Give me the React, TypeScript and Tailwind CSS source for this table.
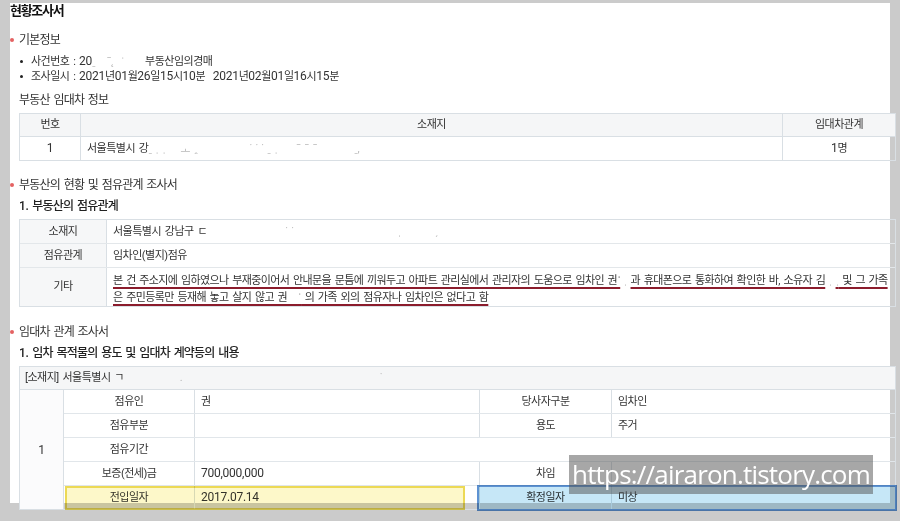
import React from "react";

const N = ({ children }: { children: React.ReactNode }) => (
  <span className="text-[12px] tracking-[-0.25px]">{children}</span>
);

const Faint = ({ w, t }: { w: string; t: string }) => (
  <span className={`inline-block overflow-hidden whitespace-pre align-top text-[#b9b9b9] ${w}`}>{t}</span>
);

const Heading = ({ children }: { children: React.ReactNode }) => (
  <div className="relative h-[16px] pl-[9px] text-[12px] leading-[16px] tracking-[-0.8px] text-[#333]">
    <span className="absolute left-0 top-[6px] h-[4px] w-[4px] rounded-full bg-[#e46262]" />
    {children}
  </div>
);

const Sub = ({ children, className = "" }: { children: React.ReactNode; className?: string }) => (
  <div className={`h-[16px] pl-[9px] text-[12px] font-medium leading-[16px] tracking-[-0.8px] text-[#222] ${className}`}>{children}</div>
);

const U = ({ children }: { children: React.ReactNode }) => (
  <span className="underline decoration-[1.5px] underline-offset-[3px] [text-decoration-color:#8b1c2c]">{children}</span>
);

export default function App() {
  return (
    <div className="relative h-[521px] w-[900px] overflow-hidden bg-[#cbcbcb] pl-[10px] pt-[10px] [font-family:Roboto,'Noto_Sans_CJK_KR',sans-serif] text-[11px] tracking-[-0.5px] [word-spacing:1.5px] text-[#333]">
      <div className="h-[500px] w-[880px] bg-white">
        {/* title */}
        <div className="-mt-[7px] h-[16px] text-[13px] font-bold leading-[16px] tracking-[-1.3px] text-[#111]">현황조사서</div>

        <div className="mt-[13px]">
          <Heading>기본정보</Heading>
        </div>
        <div className="mt-[6px] pl-[10px]">
          <div className="flex h-[15px] items-center whitespace-pre leading-[15px]">
            <span className="mr-[8px] inline-block h-[3px] w-[3px] rounded-full bg-[#222]" />
            <span>사건번호 : <N>20</N></span>
            <Faint w="w-[53px]" t="ˍ   ˉ˛  ˈ " />
            <span>부동산임의경매</span>
          </div>
          <div className="flex h-[15px] items-center whitespace-pre leading-[15px]">
            <span className="mr-[8px] inline-block h-[3px] w-[3px] rounded-full bg-[#222]" />
            <span>
              조사일시 : <N>2021</N>년<N>01</N>월<N>26</N>일<N>15</N>시<N>10</N>분  <N>2021</N>년<N>02</N>월<N>01</N>일<N>16</N>시<N>15</N>분
            </span>
          </div>
        </div>

        <div className="mt-[8px] h-[16px] pl-[9px] text-[12px] leading-[16px] tracking-[-0.8px] text-[#333]">부동산 임대차 정보</div>

        {/* table 1 */}
        <div className="ml-[9px] mt-[5px] w-[877px] border border-[#d9dfe4]">
          <div className="flex h-[23px] border-b border-[#d9dfe4] bg-[#f5f6f7] leading-[22px]">
            <div className="w-[61px] border-r border-[#d9dfe4] text-center">번호</div>
            <div className="w-[702px] border-r border-[#d9dfe4] text-center">소재지</div>
            <div className="flex-1 text-center">임대차관계</div>
          </div>
          <div className="flex h-[23px] leading-[23px]">
            <div className="w-[61px] border-r border-[#d9dfe4] text-center"><N>1</N></div>
            <div className="w-[702px] whitespace-nowrap border-r border-[#d9dfe4] pl-[6px]">
              서울특별시 강<Faint w="w-[220px]" t="ˍ ˌ ˌ    ᅟᅩ ꞈ              ˙ ˙ ˙ ˍ ˌ     ˉ ˉ ˉ          ˍ," />
            </div>
            <div className="flex-1 text-center"><N>1</N>명</div>
          </div>
        </div>

        <div className="mt-[16px]">
          <Heading>부동산의 현황 및 점유관계 조사서</Heading>
        </div>
        <Sub className="mt-[5px]">
          <N>1.</N> 부동산의 점유관계
        </Sub>

        {/* table 2 */}
        <div className="ml-[9px] mt-[5px] w-[877px] border border-[#d9dfe4]">
          <div className="flex h-[24px] border-b border-[#e3e7ea] leading-[23px]">
            <div className="w-[87px] border-r border-[#d9dfe4] bg-[#f6f7f8] text-center">소재지</div>
            <div className="flex-1 whitespace-nowrap pl-[6px]">
              서울특별시 강남구 ㄷ<Faint w="w-[240px]" t="                     ˙ ˙                            ˌ         ˏ" />
            </div>
          </div>
          <div className="flex h-[24px] border-b border-[#e3e7ea] leading-[23px]">
            <div className="w-[87px] border-r border-[#d9dfe4] bg-[#f6f7f8] text-center">점유관계</div>
            <div className="flex-1 pl-[6px]">임차인(별지)점유</div>
          </div>
          <div className="flex h-[38px]">
            <div className="flex w-[87px] items-center justify-center border-r border-[#d9dfe4] bg-[#f6f7f8]">기타</div>
            <div className="flex-1 whitespace-nowrap pl-[6px] pt-[4px] leading-[17px] tracking-[-0.6px]">
              <div>
                <U>본 건 주소지에 임하였으나 부재중이어서 안내문을 문틈에 끼워두고 아파트 관리실에서 관리자의 도움으로 임차인 권ˈ</U>
                <span className="text-[#bbb]"> ˌ </span>
                <U>과 휴대폰으로 통화하여 확인한 바, 소유자 김</U>
                <span className="text-[#bbb]">  ˌ  </span>
                <U><span className="text-[#bbb]">ˌ</span> 및 그 가족</U>
              </div>
              <div>
                <U>은 주민등록만 등재해 놓고 살지 않고 권&nbsp;&nbsp;&nbsp;<span className="text-[#888]">ˈ</span> 의 가족 외의 점유자나 임차인은 없다고 함</U>
              </div>
            </div>
          </div>
        </div>

        <div className="mt-[17px]">
          <Heading>임대차 관계 조사서</Heading>
        </div>
        <Sub className="mt-[5px]">
          <N>1.</N> 임차 목적물의 용도 및 임대차 계약등의 내용
        </Sub>

        {/* table 3 */}
        <div className="relative ml-[9px] mt-[5px] w-[877px] border border-[#d9dfe4]">
          <div className="h-[23px] whitespace-nowrap border-b border-[#d9dfe4] bg-[#f5f6f7] pl-[5px] leading-[22px]">
            [소재지] 서울특별시 ㄱ<Faint w="w-[300px]" t="               .                                                     ˙" />
          </div>
          <div className="flex">
            <div className="flex w-[44px] items-center justify-center border-r border-[#d9dfe4] bg-[#fbfbfc]"><N>1</N></div>
            <div className="flex-1">
              <div className="flex h-[24px] border-b border-[#e1e6ea] leading-[23px]">
                <div className="w-[131px] border-r border-[#d9dfe4] text-center">점유인</div>
                <div className="w-[285px] border-r border-[#d9dfe4] pl-[6px]">권</div>
                <div className="w-[132px] border-r border-[#d9dfe4] text-center">당사자구분</div>
                <div className="flex-1 pl-[6px]">임차인</div>
              </div>
              <div className="flex h-[24px] border-b border-[#e1e6ea] leading-[23px]">
                <div className="w-[131px] border-r border-[#d9dfe4] text-center">점유부분</div>
                <div className="w-[285px] border-r border-[#d9dfe4] pl-[6px]"></div>
                <div className="w-[132px] border-r border-[#d9dfe4] text-center">용도</div>
                <div className="flex-1 pl-[6px]">주거</div>
              </div>
              <div className="flex h-[24px] border-b border-[#e1e6ea] leading-[23px]">
                <div className="w-[131px] border-r border-[#d9dfe4] text-center">점유기간</div>
                <div className="flex-1 pl-[6px]"></div>
              </div>
              <div className="flex h-[24px] border-b border-[#e1e6ea] leading-[23px]">
                <div className="w-[131px] border-r border-[#d9dfe4] text-center">보증(전세)금</div>
                <div className="w-[285px] border-r border-[#d9dfe4] pl-[6px]"><N>700,000,000</N></div>
                <div className="w-[132px] border-r border-[#d9dfe4] text-center">차임</div>
                <div className="flex-1 pl-[6px]"></div>
              </div>
              <div className="flex h-[23px] leading-[23px]">
                <div className="w-[131px] border-r border-[#d9dfe4] text-center">전입일자</div>
                <div className="w-[285px] border-r border-[#d9dfe4] pl-[6px]"><N>2017.07.14</N></div>
                <div className="w-[132px] border-r border-[#d9dfe4] text-center">확정일자</div>
                <div className="flex-1 pl-[6px]">미상</div>
              </div>
            </div>
          </div>
          {/* highlight boxes */}
          <div className="absolute left-[45px] top-[119px] h-[24px] w-[400px] border-2 border-[#ecd955] bg-[#fdf8c9] mix-blend-multiply" />
          <div className="absolute left-[457px] top-[118px] h-[26px] w-[420px] border-2 border-[#5d92d2] bg-[#c6e7f7] mix-blend-multiply" />
        </div>
      </div>

      {/* watermark */}
      <div className="absolute left-[569px] top-[455px] flex h-[39px] w-[304px] items-center justify-center bg-[#505050]/50 [font-family:'Open_Sans',sans-serif] text-[26px] tracking-[-0.8px] [word-spacing:0px] text-white">
        https://airaron.tistory.com
      </div>
    </div>
  );
}
